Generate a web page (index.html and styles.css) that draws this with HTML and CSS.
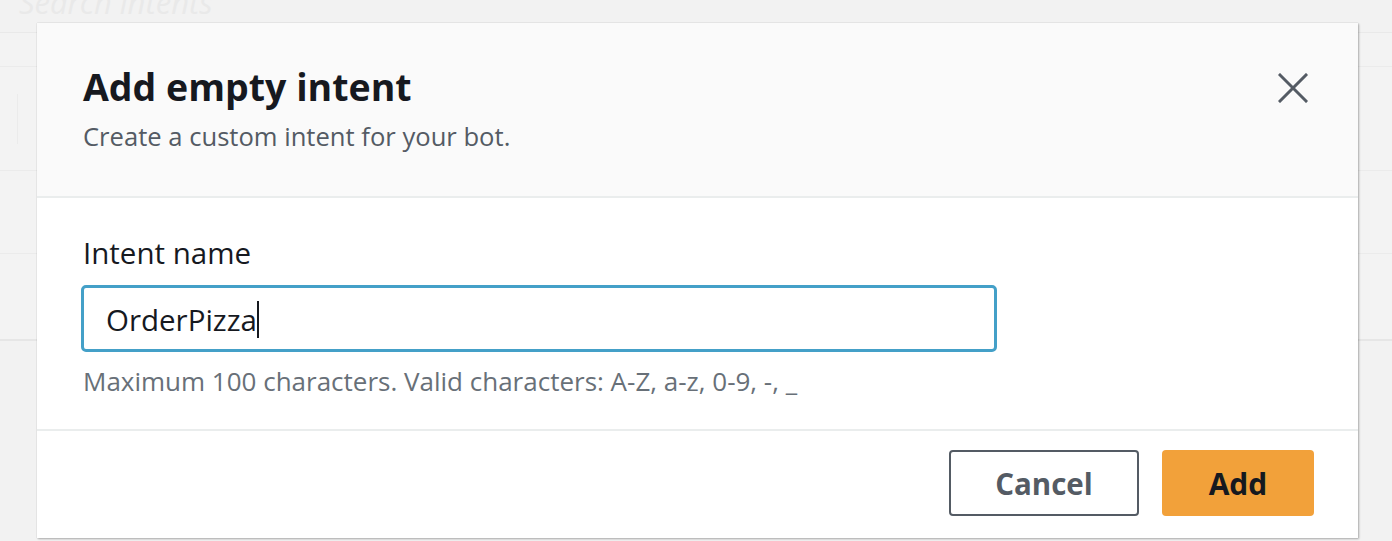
FILE: index.html
```html
<!DOCTYPE html>
<html lang="en">
<head>
<meta charset="utf-8">
<title>Add empty intent</title>
<link rel="stylesheet" href="styles.css">
</head>
<body>
<div class="page">
  <div class="search-row"><span class="search-placeholder">Search intents</span></div>
  <div class="bg-row bg-row-a"></div>
  <div class="bg-row bg-row-b"><span class="bg-divider"></span></div>
  <div class="bg-row bg-row-c"></div>
  <div class="bg-row bg-row-d"></div>
  <div class="bg-rest"></div>
</div>

<div class="modal" role="dialog" aria-labelledby="modal-title">
  <header class="modal-header">
    <div class="modal-titles">
      <h2 id="modal-title" class="modal-title">Add empty intent</h2>
      <p class="modal-subtitle">Create a custom intent for your bot.</p>
    </div>
    <button class="close-btn" aria-label="Close">
      <svg width="30" height="30" viewBox="0 0 30 30" aria-hidden="true">
        <path d="M2 2 L28 28 M28 2 L2 28" stroke="#545b64" stroke-width="3" stroke-linecap="square" fill="none"/>
      </svg>
    </button>
  </header>
  <section class="modal-body">
    <label class="field-label" for="intent-name">Intent name</label>
    <div class="input-box"><span class="input-value">OrderPizza</span><span class="caret"></span></div>
    <p class="field-hint">Maximum 100 characters. Valid characters: A-Z, a-z, 0-9, -, _</p>
  </section>
  <footer class="modal-footer">
    <button class="btn btn-cancel">Cancel</button>
    <button class="btn btn-add">Add</button>
  </footer>
</div>
</body>
</html>
```

FILE: styles.css
```css
* { box-sizing: border-box; }

html, body {
  margin: 0;
  padding: 0;
  width: 1392px;
  height: 541px;
  overflow: hidden;
  background: #f2f2f2;
  font-family: "Open Sans", "Noto Sans", sans-serif;
}

.page {
  display: flex;
  flex-direction: column;
  height: 541px;
}

.search-row {
  height: 33px;
  border-bottom: 1px solid #e9e9e9;
  padding-left: 19px;
  overflow: hidden;
}

.search-placeholder {
  display: block;
  margin-top: -18px;
  font-size: 31px;
  font-style: italic;
  color: #e9e9e9;
  line-height: 40px;
}

.bg-row {
  border-bottom: 1px solid #ebebeb;
  background: #f3f3f3;
}
.bg-row-a { height: 34px; }
.bg-row-b {
  height: 104px;
  padding: 27px 0 0 17px;
}
.bg-divider {
  display: block;
  width: 1px;
  height: 50px;
  background: #ebebeb;
}
.bg-row-c { height: 83px; }
.bg-row-d { height: 87px; border-bottom: 2px solid #e6e6e6; }
.bg-rest { flex: 1; }

.modal {
  position: absolute;
  left: 37px;
  top: 23px;
  width: 1321px;
  height: 515px;
  background: #ffffff;
  box-shadow: 1px 1px 2px rgba(0,0,0,0.28), 0 0 1px rgba(0,0,0,0.22);
  display: flex;
  flex-direction: column;
}

.modal-header {
  height: 175px;
  flex: none;
  background: #fafafa;
  border-bottom: 2px solid #eaeded;
  display: flex;
  justify-content: space-between;
  align-items: flex-start;
  padding: 42px 50px 0 46px;
}

.modal-title {
  margin: 0;
  font-size: 37.5px;
  font-weight: 700;
  line-height: 44px;
  color: #16191f;
}

.modal-subtitle {
  margin: 12px 0 0;
  font-size: 25.6px;
  line-height: 32px;
  color: #545b64;
}

.close-btn {
  margin-top: 8px;
  padding: 0;
  border: 0;
  background: transparent;
  width: 30px;
  height: 30px;
}
.close-btn svg { display: block; }

.modal-body {
  height: 233px;
  flex: none;
  border-bottom: 2px solid #eaeded;
  padding: 37px 0 0 46px;
  display: flex;
  flex-direction: column;
  align-items: flex-start;
}

.field-label {
  font-size: 29.5px;
  line-height: 36px;
  color: #16191f;
}

.input-box {
  margin-top: 14px;
  margin-left: -2px;
  width: 916px;
  height: 67px;
  flex: none;
  border: 3px solid #44a0c8;
  border-radius: 5px;
  display: flex;
  align-items: center;
  padding: 2px 0 0 22px;
}

.input-value {
  font-size: 29.5px;
  color: #16191f;
  line-height: 36px;
}

.caret {
  width: 2px;
  height: 37px;
  background: #16191f;
}

.field-hint {
  margin: 13px 0 0;
  font-size: 26px;
  line-height: 32px;
  color: #687078;
}

.modal-footer {
  flex: 1;
  display: flex;
  justify-content: flex-end;
  align-items: flex-start;
  gap: 23px;
  padding: 19px 44px 0 0;
}

.btn {
  height: 66px;
  border-radius: 4px;
  font-family: "Open Sans", "Noto Sans", sans-serif;
  font-weight: 700;
  padding: 0;
}

.btn-cancel {
  width: 190px;
  font-size: 29.5px;
  background: #ffffff;
  border: 2px solid #545b64;
  color: #545b64;
}

.btn-add {
  width: 152px;
  font-size: 30px;
  background: #f2a13a;
  border: 0;
  color: #16191f;
}
```
